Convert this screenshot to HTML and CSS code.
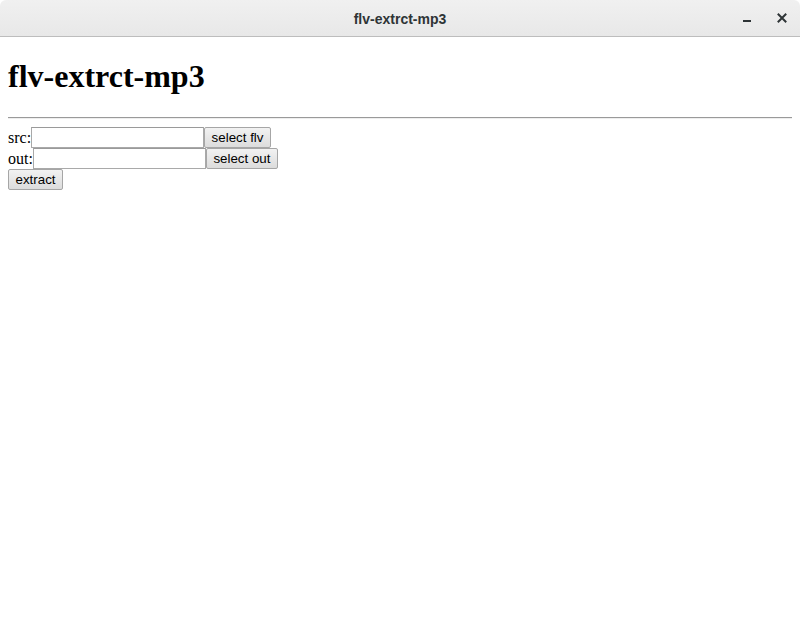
FILE: index.html
```html
<!DOCTYPE html>
<html>
<head>
<meta charset="utf-8">
<title>flv-extrct-mp3</title>
<link rel="stylesheet" href="styles.css">
</head>
<body>
<div class="window">
  <header class="titlebar">
    <span class="title">flv-extrct-mp3</span>
    <div class="controls">
      <svg class="ctl" width="16" height="16" viewBox="0 0 16 16"><rect x="4" y="10" width="8" height="2" fill="#2e3436"/></svg>
      <svg class="ctl" width="16" height="16" viewBox="0 0 16 16"><path d="M4.5 4.5 L11.5 11.5 M11.5 4.5 L4.5 11.5" stroke="#2e3436" stroke-width="2" stroke-linecap="square"/></svg>
    </div>
  </header>
  <main class="page">
    <h1 class="heading">flv-extrct-mp3</h1>
    <hr class="rule">
    <div class="row"><label class="lbl">src:</label><input class="field" type="text"><button class="btn">select flv</button></div>
    <div class="row"><label class="lbl">out:</label><input class="field" type="text"><button class="btn">select out</button></div>
    <div class="row"><button class="btn">extract</button></div>
  </main>
</div>
</body>
</html>
```
FILE: styles.css
```css
html, body {
  margin: 0;
  padding: 0;
  height: 100%;
  background: #ffffff;
}
.window {
  display: flex;
  flex-direction: column;
  height: 100%;
  font-family: "Liberation Serif", serif;
  font-size: 16px;
  color: #000;
}
.titlebar {
  position: relative;
  height: 36px;
  flex: none;
  display: flex;
  align-items: center;
  justify-content: center;
  background: linear-gradient(#f0f0f0, #e8e8e8);
  border-bottom: 1px solid #bdbdbd;
  border-radius: 6px 6px 0 0;
  font-family: "Liberation Sans", "Noto Sans", sans-serif;
}
.title {
  font-weight: bold;
  font-size: 14px;
  color: #2e3436;
  margin-top: 1px;
}
.controls {
  position: absolute;
  right: 10px;
  top: 10px;
  display: flex;
  gap: 19px;
}
.ctl {
  display: block;
}
.page {
  flex: 1;
  padding: 0 8px;
  overflow: hidden;
}
.heading {
  font-size: 32px;
  font-weight: bold;
  margin: 21.44px 0;
  line-height: normal;
}
.rule {
  margin: 0 0 8px;
  border: none;
  border-top: 1px solid #9a9a9a;
  border-bottom: 1px solid #eeeeee;
  height: 0;
}
.row {
  display: flex;
  align-items: center;
  height: 21px;
}
.lbl {
  line-height: 21px;
}
.field {
  box-sizing: border-box;
  width: 173px;
  height: 21px;
  margin: 0;
  padding: 1px 2px;
  border: 1px solid #a9a9a9;
  border-top-color: #9a9a9a;
  background: #fff;
  font-family: "Liberation Sans", sans-serif;
  font-size: 13.33px;
}
.btn {
  box-sizing: border-box;
  height: 21px;
  margin: 0;
  padding: 0 6.5px;
  border: 1px solid #a6a6a6;
  border-radius: 2px;
  background: linear-gradient(#f2f2f2, #dcdcdc);
  font-family: "Liberation Sans", sans-serif;
  font-size: 13.33px;
  color: #000;
}
```
